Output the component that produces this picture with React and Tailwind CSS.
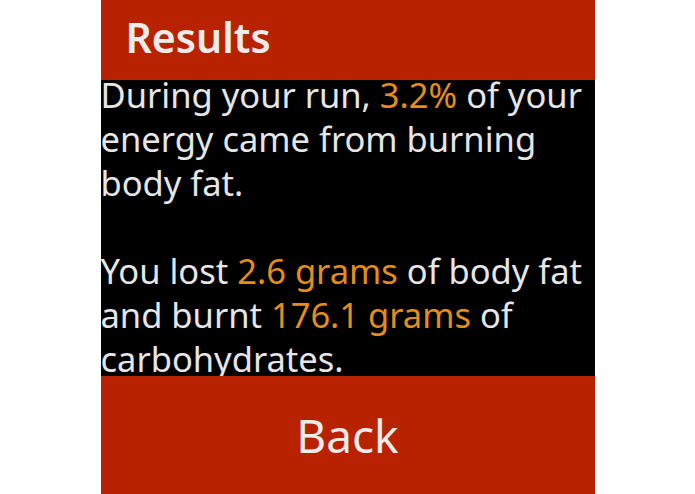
export default function App() {
    return (
        <div className="w-full h-[494px] bg-white flex justify-center" style={{ fontFamily: '"Noto Sans", sans-serif' }}>
            <div className="w-[494px] h-full flex flex-col">
                <div className="h-[80px] bg-[#b92200] flex items-center pl-[25px] pb-[5px]">
                    <h1 className="text-[41px] leading-none font-semibold text-[#ececec]">Results</h1>
                </div>
                <div className="h-[296px] bg-black overflow-hidden text-[34.5px] leading-[44px] text-[#e6e6e6]">
                    <p className="-mt-[7px]">
                        During your run, <span className="text-[#e48d1c]">3.2%</span> of your energy came from burning body fat.
                    </p>
                    <p className="mt-[44px]">
                        You lost <span className="text-[#e48d1c]">2.6 grams</span> of body fat and burnt{' '}
                        <span className="text-[#e48d1c]">176.1 grams</span> of carbohydrates.
                    </p>
                </div>
                <button className="flex-1 bg-[#b92200] text-[#ececec] text-[46px] flex items-center justify-center">
                    Back
                </button>
            </div>
        </div>
    );
}
